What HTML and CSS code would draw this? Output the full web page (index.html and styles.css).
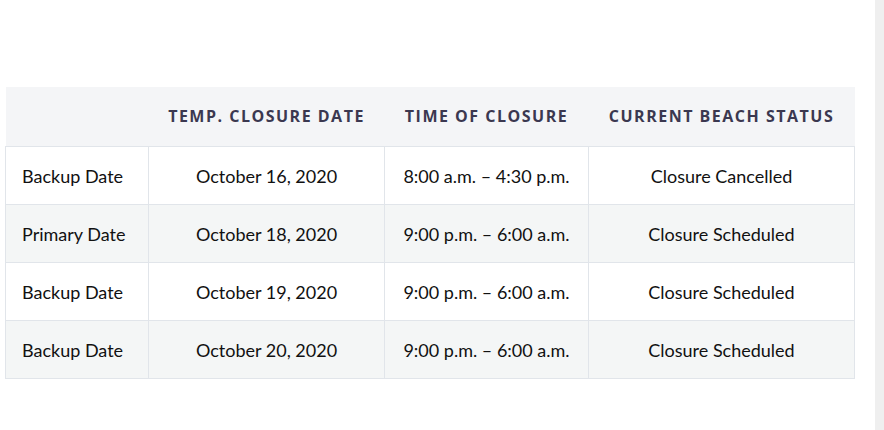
FILE: index.html
```html
<!DOCTYPE html>
<html>
<head>
<meta charset="utf-8">
<link rel="stylesheet" href="styles.css">
</head>
<body>
<div class="page">
  <table class="closures">
    <colgroup>
      <col class="c1"><col class="c2"><col class="c3"><col class="c4">
    </colgroup>
    <thead>
      <tr>
        <th></th>
        <th>TEMP. CLOSURE DATE</th>
        <th>TIME OF CLOSURE</th>
        <th>CURRENT BEACH STATUS</th>
      </tr>
    </thead>
    <tbody>
      <tr>
        <td class="label">Backup Date</td>
        <td>October 16, 2020</td>
        <td>8:00 a.m. – 4:30 p.m.</td>
        <td>Closure Cancelled</td>
      </tr>
      <tr class="alt">
        <td class="label">Primary Date</td>
        <td>October 18, 2020</td>
        <td>9:00 p.m. – 6:00 a.m.</td>
        <td>Closure Scheduled</td>
      </tr>
      <tr>
        <td class="label">Backup Date</td>
        <td>October 19, 2020</td>
        <td>9:00 p.m. – 6:00 a.m.</td>
        <td>Closure Scheduled</td>
      </tr>
      <tr class="alt">
        <td class="label">Backup Date</td>
        <td>October 20, 2020</td>
        <td>9:00 p.m. – 6:00 a.m.</td>
        <td>Closure Scheduled</td>
      </tr>
    </tbody>
  </table>
  <div class="scrollbar"></div>
</div>
</body>
</html>
```
FILE: styles.css
```css
html, body {
  margin: 0;
  padding: 0;
  background: #ffffff;
}
.page {
  display: flex;
  height: 430px;
  padding-left: 5px;
  box-sizing: border-box;
}
.closures {
  margin-top: 87px;
  border-collapse: collapse;
  table-layout: fixed;
  width: 849px;
  align-self: flex-start;
  font-family: Lato, "Liberation Sans", sans-serif;
  font-size: 18px;
  color: #111111;
}
.c1 { width: 143px; }
.c2 { width: 236px; }
.c3 { width: 204px; }
.c4 { width: 266px; }
.closures th {
  height: 58px;
  padding: 0 0 1px 0;
  background: #f4f5f7;
  font-family: "Open Sans", sans-serif;
  font-weight: 700;
  font-size: 16px;
  letter-spacing: 1.5px;
  color: #3b3850;
  text-align: center;
  border: none;
  white-space: nowrap;
}
.closures td {
  height: 57px;
  padding: 0;
  text-align: center;
  border: 1px solid #e1e5ea;
  white-space: nowrap;
}
.closures td.label {
  text-align: left;
  padding-left: 16px;
}
.closures tr.alt td {
  background: #f4f6f6;
}
.scrollbar {
  margin-left: auto;
  width: 9px;
  height: 430px;
  background: #efefef;
}
```
